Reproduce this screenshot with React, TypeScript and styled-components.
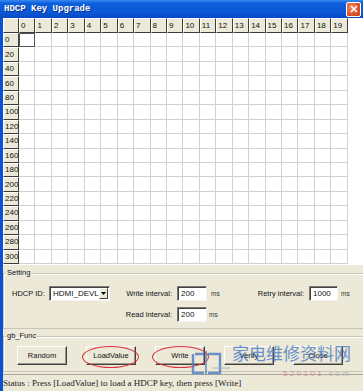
import * as React from 'react';
import styled, { createGlobalStyle } from 'styled-components';

const COLS = Array.from({ length: 20 }, (_, i) => i);
const ROWS = Array.from({ length: 16 }, (_, i) => i * 20);
const BUTTONS = ['Random', 'LoadValue', 'Write', 'Verify', 'Close'];

const GlobalStyle = createGlobalStyle`
	html, body {
		margin: 0;
		padding: 0;
		background: #ece9d8;
		overflow: hidden;
	}
	body {
		font-family: 'Liberation Sans', Arial, sans-serif;
	}
`;

export default function App() {
	return (
		<>
			<GlobalStyle />
			<Window>
				<TitleBar>
					<Title>HDCP Key Upgrade</Title>
					<CloseBox>
						<svg width="8" height="8" viewBox="0 0 8 8">
							<path d="M1 1L7 7M7 1L1 7" stroke="#fff" strokeWidth="1.6" />
						</svg>
					</CloseBox>
				</TitleBar>
				<Body>
					<Content>
						<GridArea>
							<Grid>
								<HeadCell />
								{COLS.map(c => (
									<HeadCell key={c}>{c}</HeadCell>
								))}
								{ROWS.map(r => (
									<React.Fragment key={r}>
										<HeadCell>{r}</HeadCell>
										{COLS.map(c => (
											<Cell key={c} $focused={r === 0 && c === 0} />
										))}
									</React.Fragment>
								))}
							</Grid>
						</GridArea>
						<Panel>
							<Group>
								<Legend>Setting</Legend>
								<SettingGrid>
									<Label $pad={8}>HDCP ID:</Label>
									<Combo>
										<span>HDMI_DEVL</span>
										<ComboArrow>
											<svg width="5" height="3" viewBox="0 0 5 3">
												<path d="M0 0H5L2.5 3Z" fill="#000" />
											</svg>
										</ComboArrow>
									</Combo>
									<Label $right>Write interval:</Label>
									<TextBox>200</TextBox>
									<Unit $pad={4}>ms</Unit>
									<Label $right>Retry interval:</Label>
									<TextBox>1000</TextBox>
									<Unit $pad={3}>ms</Unit>

									<span />
									<span />
									<Label $right>Read interval:</Label>
									<TextBox>200</TextBox>
									<Unit $pad={2}>ms</Unit>
								</SettingGrid>
							</Group>
							<Group>
								<Legend>gb_Func</Legend>
								<ButtonRow>
									{BUTTONS.map(b => (
										<Button key={b}>{b}</Button>
									))}
								</ButtonRow>
							</Group>
						</Panel>
						<StatusBar>Status : Press [LoadValue] to load a HDCP key, then press [Write]</StatusBar>
					</Content>
				</Body>
				<Ring $left={82} />
				<Ring $left={152} />
				<Watermark>
					<svg width="40" height="30" viewBox="0 0 40 30">
						<path d="M3 8V27H14M14 8H5" fill="none" stroke="#4a7cc4" strokeWidth="2.4" />
						<path d="M18 8H30V27H18" fill="none" stroke="#4a7cc4" strokeWidth="2.4" />
						<path d="M16 5V29" stroke="#4a7cc4" strokeWidth="1.6" />
						<path d="M22 22H40" stroke="#9aa4b4" strokeWidth="1" />
					</svg>
					<MarkText>
						<MarkTitle>家电维修资料网</MarkTitle>
						<MarkUrl>
							<span>520101</span>.com
						</MarkUrl>
					</MarkText>
				</Watermark>
			</Window>
		</>
	);
}

const Window = styled.div`
	position: relative;
	width: 363px;
	height: 391px;
	display: flex;
	flex-direction: column;
	overflow: hidden;
	background: #ece9d8;
`;

const TitleBar = styled.div`
	height: 18px;
	flex: none;
	display: flex;
	align-items: center;
	justify-content: space-between;
	padding: 0 2px 0 4px;
	background: linear-gradient(#3b8af2 0%, #0d5fdc 18%, #0a58d6 70%, #0748c4 100%);
`;

const Title = styled.div`
	font-family: 'Liberation Mono', 'Courier New', monospace;
	font-weight: bold;
	font-size: 9px;
	color: #fff;
	text-shadow: 1px 1px 0 #0a2f8a;
	letter-spacing: 0;
`;

const CloseBox = styled.div`
	width: 13px;
	height: 13px;
	display: flex;
	align-items: center;
	justify-content: center;
	border: 1px solid #fff;
	border-radius: 2px;
	background: radial-gradient(circle at 35% 35%, #f08a6a, #d84a22 70%);
`;

const Body = styled.div`
	flex: 1;
	display: flex;
	border-left: 3px solid #0a52d2;
	min-height: 0;
`;

const Content = styled.div`
	flex: 1;
	display: flex;
	flex-direction: column;
	min-width: 0;
`;

const GridArea = styled.div`
	height: 247px;
	flex: none;
	background: #fff;
	overflow: hidden;
`;

const Grid = styled.div`
	display: grid;
	grid-template-columns: 16px repeat(20, 16.45px);
	grid-template-rows: 15px repeat(16, 14.45px);
	font-size: 8px;
	color: #111;
`;

const HeadCell = styled.div`
	box-sizing: border-box;
	background: #ece9d8;
	border-top: 1px solid #fff;
	border-left: 1px solid #fff;
	border-right: 1px solid #3c3c3c;
	border-bottom: 1px solid #3c3c3c;
	padding-left: 1px;
	display: flex;
	align-items: center;
	line-height: 1;
`;

const Cell = styled.div<{ $focused?: boolean }>`
	box-sizing: border-box;
	border-right: 1px solid #d2d2d2;
	border-bottom: 1px solid #d2d2d2;
	outline: ${p => (p.$focused ? '1px solid #555' : 'none')};
	outline-offset: -1px;
`;

const Panel = styled.div`
	flex: 1;
	display: flex;
	flex-direction: column;
	gap: 2px;
	padding-top: 3px;
`;

const Group = styled.fieldset`
	margin: 0 -12px 0 0;
	padding: 0 0 6px 0;
	border: 1px solid #c9c6b6;
	box-shadow: inset 1px 1px 0 #fff;
	min-width: 0;
`;

const Legend = styled.legend`
	font-size: 7.5px;
	line-height: 10px;
	padding: 0 1px;
	margin-left: 2px;
	color: #111;
`;

const SettingGrid = styled.div`
	display: grid;
	grid-template-columns: 45px 61px 67px 30px 38px 64px 29px auto;
	grid-template-rows: 15px 15px;
	row-gap: 6px;
	padding-top: 8px;
	align-items: center;
	font-size: 7.5px;
	color: #111;
`;

const Label = styled.div<{ $pad?: number; $right?: boolean }>`
	padding-left: ${p => p.$pad ?? 0}px;
	padding-right: ${p => (p.$right ? 5 : 0)}px;
	text-align: ${p => (p.$right ? 'right' : 'left')};
	white-space: nowrap;
`;

const Unit = styled.div<{ $pad: number }>`
	padding-left: ${p => p.$pad}px;
	font-size: 6.5px;
	color: #333;
`;

const sunken = `
	box-sizing: border-box;
	height: 15px;
	background: #fff;
	border: 1px solid;
	border-color: #7a7a7a #f4f4f4 #f4f4f4 #7a7a7a;
	box-shadow: inset 1px 1px 0 #404040;
`;

const TextBox = styled.div`
	${sunken}
	padding: 2px 0 0 3px;
	font-size: 8px;
	line-height: 10px;
`;

const Combo = styled.div`
	${sunken}
	display: flex;
	align-items: center;
	justify-content: space-between;
	padding: 0 1px 0 3px;
	font-size: 8px;
`;

const ComboArrow = styled.div`
	box-sizing: border-box;
	width: 11px;
	height: 11px;
	display: flex;
	align-items: center;
	justify-content: center;
	background: #ece9d8;
	border: 1px solid;
	border-color: #fff #404040 #404040 #fff;
`;

const ButtonRow = styled.div`
	display: flex;
	gap: 19px;
	padding: 5px 0 0 13px;
`;

const Button = styled.div`
	box-sizing: border-box;
	width: 50px;
	height: 19px;
	display: flex;
	align-items: center;
	justify-content: center;
	background: #ece9d8;
	border: 1px solid;
	border-color: #fff #404040 #404040 #fff;
	box-shadow: inset -1px -1px 0 #9a988c;
	font-size: 7.5px;
	color: #111;
`;

const StatusBar = styled.div`
	height: 16px;
	flex: none;
	display: flex;
	align-items: center;
	border-top: 1px solid #aca899;
	font-family: 'Liberation Serif', 'Times New Roman', serif;
	font-size: 9px;
	color: #1a1a1a;
	white-space: nowrap;
`;

const Ring = styled.div<{ $left: number }>`
	position: absolute;
	left: ${p => p.$left}px;
	top: 346px;
	width: 57px;
	height: 22px;
	border: 1.3px solid #d8323a;
	border-radius: 50%;
	box-sizing: border-box;
`;

const Watermark = styled.div`
	position: absolute;
	left: 190px;
	top: 340px;
	display: flex;
	align-items: flex-start;
	gap: 2px;
	opacity: 0.8;
	pointer-events: none;
	svg {
		margin-top: 6px;
	}
`;

const MarkText = styled.div`
	display: flex;
	flex-direction: column;
	align-items: flex-end;
`;

const MarkTitle = styled.div`
	font-family: 'Noto Sans CJK SC', sans-serif;
	font-size: 17px;
	line-height: 26px;
	color: #4a7cc4;
	letter-spacing: 0;
`;

const MarkUrl = styled.div`
	font-family: 'Liberation Sans', Arial, sans-serif;
	font-size: 8px;
	line-height: 9px;
	letter-spacing: 2.4px;
	color: #a8aab4;
	margin-top: 3px;
	span {
		color: #d7809c;
	}
`;
